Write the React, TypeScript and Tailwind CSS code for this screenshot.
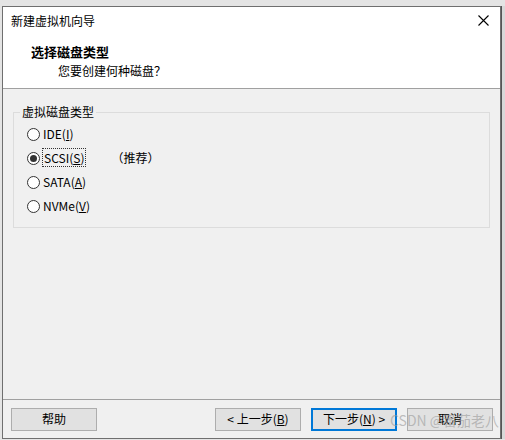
const font = { fontFamily: '"Noto Sans CJK SC", "Liberation Sans", sans-serif' };

function Radio({ checked, children }: { checked?: boolean; children: React.ReactNode }) {
  return (
    <div className="flex items-center h-[24px]">
      <span className="w-[13px] h-[13px] rounded-full border border-[#333333] bg-white flex items-center justify-center">
        {checked && <span className="w-[7px] h-[7px] rounded-full bg-[#333333]" />}
      </span>
      <span className="ml-[3px]">{children}</span>
    </div>
  );
}

function Btn({ children, primary }: { children: React.ReactNode; primary?: boolean }) {
  return (
    <div
      className={
        primary
          ? 'w-[86px] h-[23px] border-2 border-[#0078d7] bg-[#e1e1e1] flex items-center justify-center'
          : 'w-[86px] h-[23px] border border-[#adadad] bg-[#e1e1e1] flex items-center justify-center'
      }
    >
      {children}
    </div>
  );
}

export default function App() {
  return (
    <div className="w-[505px] h-[440px] bg-[#e4e4e4] relative overflow-hidden text-[12px] text-black leading-none" style={font}>
      <div className="flex pt-[6px] pl-[2px]">
        <div className="w-[499px] h-[433px] border border-[#6f6f6f] bg-[#f0f0f0] flex flex-col">
          {/* header */}
          <div className="bg-white h-[82px] border-b border-[#a0a0a0] flex flex-col">
            <div className="h-[27px] flex items-center justify-between pl-[8px] pr-[10px]">
              <span>新建虚拟机向导</span>
              <svg width="11" height="11" viewBox="0 0 11 11" className="mr-[1px]">
                <path d="M0.5 0.5 L10.5 10.5 M10.5 0.5 L0.5 10.5" stroke="#000" strokeWidth="1.1" />
              </svg>
            </div>
            <div className="pl-[28px] pt-[11px] font-bold text-[13px]">选择磁盘类型</div>
            <div className="pl-[55px] pt-[7px]">您要创建何种磁盘？</div>
          </div>

          {/* body */}
          <div className="flex-1 px-[10px] pt-[23px]">
            <div className="relative border border-[#dcdcdc] h-[116px] pt-[9px] pl-[13px]">
              <span className="absolute left-[6px] top-[-7px] bg-[#f0f0f0] px-[2px]">虚拟磁盘类型</span>
              <Radio>IDE(<u>I</u>)</Radio>
              <div className="flex items-center">
                <Radio checked>
                  <span className="outline outline-1 outline-dotted outline-[#333] px-[1px]">SCSI(<u>S</u>)</span>
                </Radio>
                <span className="ml-[26px]">（推荐）</span>
              </div>
              <Radio>SATA(<u>A</u>)</Radio>
              <Radio>NVMe(<u>V</u>)</Radio>
            </div>
          </div>

          {/* footer */}
          <div className="border-t border-[#a0a0a0] h-[39px] flex items-center pl-[8px] pr-[7px]">
            <Btn>帮助</Btn>
            <div className="flex-1" />
            <div className="flex gap-[10px]">
              <Btn>&lt; 上一步(<u>B</u>)</Btn>
              <Btn primary>下一步(<u>N</u>) &gt;</Btn>
              <Btn>取消</Btn>
            </div>
          </div>
        </div>
        <div className="flex-1 border-l border-[#555555] bg-[#d8d8d8]" />
      </div>
      <span className="absolute left-[390px] top-[413px] whitespace-nowrap text-[14px] text-[#9a9a9a]/60 pointer-events-none">CSDN @番茄老八</span>
    </div>
  );
}
